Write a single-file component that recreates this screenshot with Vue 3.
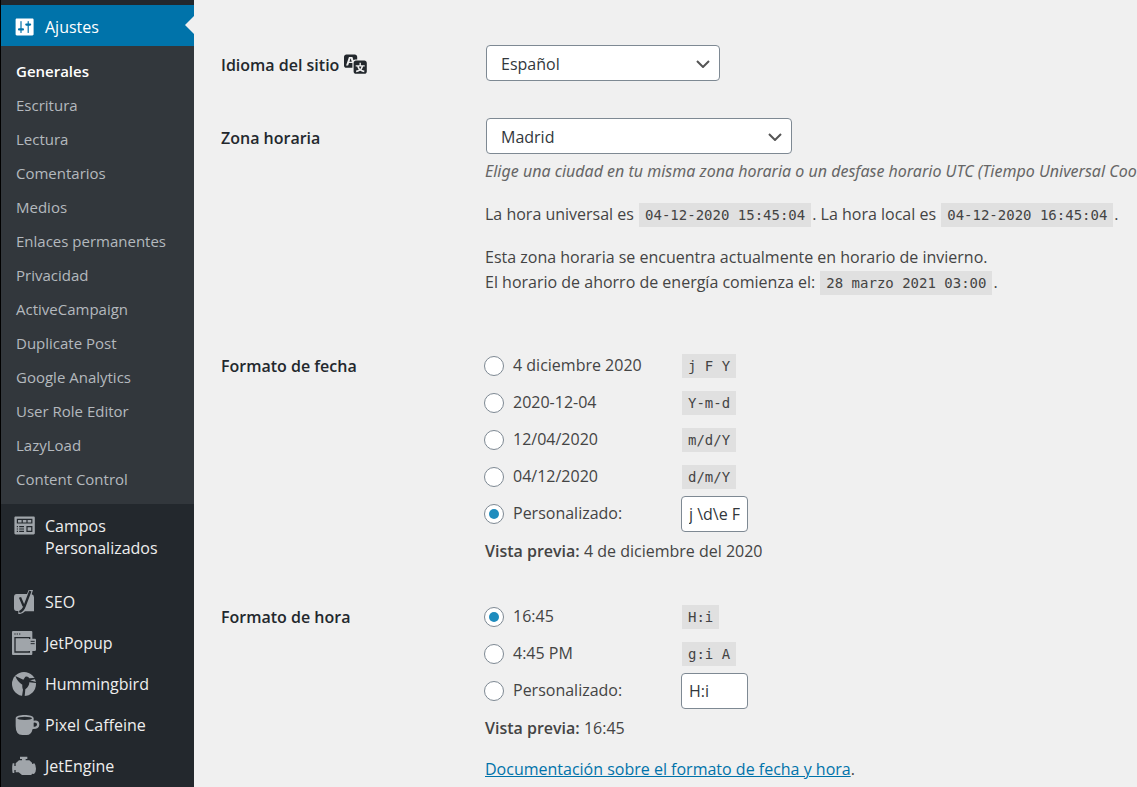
<script setup>
import { ref } from 'vue'

const submenu = ['Generales', 'Escritura', 'Lectura', 'Comentarios', 'Medios', 'Enlaces permanentes', 'Privacidad', 'ActiveCampaign', 'Duplicate Post', 'Google Analytics', 'User Role Editor', 'LazyLoad', 'Content Control']

const dateFormats = [
  { text: '4 diciembre 2020', format: 'j F Y' },
  { text: '2020-12-04', format: 'Y-m-d' },
  { text: '12/04/2020', format: 'm/d/Y' },
  { text: '04/12/2020', format: 'd/m/Y' },
]
const timeFormats = [
  { text: '16:45', format: 'H:i' },
  { text: '4:45 PM', format: 'g:i A' },
]

const language = ref('Español')
const zone = ref('Madrid')
const dateFormat = ref('custom')
const timeFormat = ref('H:i')
const customDate = ref('j \\d\\e F \\d\\e\\l Y')
const customTime = ref('H:i')
</script>

<template>
  <div class="admin">
    <nav class="sidebar" aria-label="Menú principal">
      <a class="item current" href="#ajustes">
        <svg class="icon" viewBox="0 0 20 20"><path d="M18 16V4c0-.55-.45-1-1-1H4c-.55 0-1 .45-1 1v12c0 .55.45 1 1 1h13c.55 0 1-.45 1-1zM8 11h1c.55 0 1 .45 1 1s-.45 1-1 1H8v1.5c0 .28-.22.5-.5.5s-.5-.22-.5-.5V13H6c-.55 0-1-.45-1-1s.45-1 1-1h1V5.5c0-.28.22-.5.5-.5s.5.22.5.5V11zm5-2h-1c-.55 0-1-.45-1-1s.45-1 1-1h1V5.5c0-.28.22-.5.5-.5s.5.22.5.5V7h1c.55 0 1 .45 1 1s-.45 1-1 1h-1v5.5c0 .28-.22.5-.5.5s-.5-.22-.5-.5V9z" /></svg>
        <span>Ajustes</span>
      </a>
      <ul class="submenu">
        <li v-for="(name, i) in submenu" :key="name"><a href="#" :class="{ active: i === 0 }">{{ name }}</a></li>
      </ul>
      <a class="item fields" href="#campos">
        <svg class="icon" viewBox="0 0 20 20"><path fill-rule="evenodd" d="M19 16V3c0-.55-.45-1-1-1H3c-.55 0-1 .45-1 1v13c0 .55.45 1 1 1h15c.55 0 1-.45 1-1zM4 4h13v4H4zM4 10h1v1H4zM6 10h4v1H6zM12 10h5v5h-5zM4 12h1v1H4zM6 12h4v1H6zM4 14h1v1H4zM6 14h4v1H6z" /><path d="M5 5h3v2H5zM9 5h3v2H9zM13 5h3v2h-3zM13 11h3v3h-3z" /></svg>
        <span>Campos Personalizados</span>
      </a>
      <a class="item" href="#seo">
        <svg class="icon" viewBox="36 267 72 72"><path d="M50 279H81L86 267H99L95 280Q102 281 102 289V331H75Q68 340 55 339V330H50Q42 330 42 321V288Q42 279 50 279Z" /><path class="cut" d="M60 289L71 315M91 270L74 315Q69 329 58 333" /></svg>
        <span>SEO</span>
      </a>
      <a class="item" href="#jetpopup">
        <svg class="icon" viewBox="36 30 72 72"><path d="M39 30H94Q97 30 97 33V53H105Q108 53 108 56V86Q108 90 104 90H97V99Q97 102 94 102H39Q36 102 36 99V33Q36 30 39 30Z" /><path class="line" d="M89 54V50H45V93H88V90" /><path class="dots" d="M43 39h4M50 39h4M57 39h4M92 61H104M92 68H104" /></svg>
        <span>JetPopup</span>
      </a>
      <a class="item" href="#hummingbird">
        <svg class="icon" viewBox="36 153 72 72"><circle cx="72" cy="189" r="36" /><path class="dark" d="M46 165L70 176L76 167Q84 164 88 172L108 170V174L90 178L108 183V186L88 184Q88 196 76 205L74 226H66L69 206Q66 200 67 191Q52 182 46 165Z" /></svg>
        <span>Hummingbird</span>
      </a>
      <a class="item" href="#pixelcaffeine">
        <svg class="icon mug" viewBox="36 276 84 72"><path fill-rule="evenodd" d="M47 292C47 279 101 279 101 292V299Q118 296 118 311Q117 325 98 324Q94 342 80 342H67Q47 342 47 315ZM101 305V317Q111 318 111 310Q111 304 101 305Z" /><ellipse class="dark" cx="74" cy="292" rx="22" ry="5" /></svg>
        <span>Pixel Caffeine</span>
      </a>
      <a class="item" href="#jetengine">
        <svg class="icon" viewBox="36 399 72 72"><path d="M60 407H82V414H77V418H88L96 425V429L103 427Q108 432 108 443Q108 454 102 459L96 458L94 462H66L56 454H47V447H43V456H38Q35 442 38 427H43V435H47V427L57 418H66V414H60Z" /></svg>
        <span>JetEngine</span>
      </a>
    </nav>

    <main class="content">
      <div class="row">
        <label class="heading low" for="language">Idioma del sitio
          <svg class="translate" viewBox="0 0 20 20"><path fill-rule="evenodd" d="M11 7H9.49c-.63 0-1.25.3-1.59.7L7 5H4.13l-2.39 7h1.69l.74-2H7v4H2c-1.1 0-2-.9-2-2V5c0-1.1.9-2 2-2h7c1.1 0 2 .9 2 2v2zM6.51 9H4.49l1-2.93zM10 8h7c1.1 0 2 .9 2 2v7c0 1.1-.9 2-2 2h-7c-1.1 0-2-.9-2-2v-7c0-1.1.9-2 2-2zm7.25 5v-1.08h-3.17V9.75h-1.16v2.17H9.75V13h1.28c.11.85.56 1.85 1.28 2.62-.87.36-1.89.62-2.31.62-.01.02.22.97.2 1.46.84 0 2.21-.5 3.28-1.15 1.09.65 2.48 1.15 3.34 1.15-.02-.49.2-1.44.2-1.46-.43 0-1.49-.27-2.38-.63.7-.77 1.14-1.77 1.25-2.61h1.36zm-3.81 1.93c-.5-.46-.85-1.13-1.01-1.93h2.09c-.17.8-.51 1.47-1 1.93l-.04.03s-.03-.02-.04-.03z" /></svg>
        </label>
        <div class="field">
          <div class="select language">
            <select id="language" v-model="language"><option>Español</option></select>
            <svg viewBox="0 0 14 8"><path d="M1 1l6 6 6-6" /></svg>
          </div>
        </div>
      </div>

      <div class="row zone">
        <label class="heading low" for="zone">Zona horaria</label>
        <div class="field">
          <div class="select city">
            <select id="zone" v-model="zone"><option>Madrid</option></select>
            <svg viewBox="0 0 14 8"><path d="M1 1l6 6 6-6" /></svg>
          </div>
          <p class="description">Elige una ciudad en tu misma zona horaria o un desfase horario UTC (Tiempo Universal Coordinado).</p>
          <p>La hora universal es <code>04-12-2020 15:45:04</code>. La hora local es <code>04-12-2020 16:45:04</code>.</p>
          <p>Esta zona horaria se encuentra actualmente en horario de invierno.<br>El horario de ahorro de energía comienza el: <code>28 marzo 2021 03:00</code>.</p>
        </div>
      </div>

      <div class="row date" role="group" aria-labelledby="date-title">
        <div id="date-title" class="heading">Formato de fecha</div>
        <div class="field">
          <div v-for="f in dateFormats" :key="f.format" class="option">
            <label><input v-model="dateFormat" type="radio" name="date" :value="f.format">{{ f.text }}</label>
            <code>{{ f.format }}</code>
          </div>
          <div class="option">
            <label><input v-model="dateFormat" type="radio" name="date" value="custom">Personalizado:</label>
            <input v-model="customDate" class="text" type="text" aria-label="Formato de fecha personalizado">
          </div>
          <div class="preview"><strong>Vista previa:</strong> 4 de diciembre del 2020</div>
        </div>
      </div>

      <div class="row" role="group" aria-labelledby="time-title">
        <div id="time-title" class="heading">Formato de hora</div>
        <div class="field">
          <div v-for="f in timeFormats" :key="f.format" class="option">
            <label><input v-model="timeFormat" type="radio" name="time" :value="f.format">{{ f.text }}</label>
            <code>{{ f.format }}</code>
          </div>
          <div class="option">
            <label><input v-model="timeFormat" type="radio" name="time" value="custom">Personalizado:</label>
            <input v-model="customTime" class="text" type="text" aria-label="Formato de hora personalizado">
          </div>
          <div class="preview"><strong>Vista previa:</strong> 16:45</div>
          <div class="docs"><a href="#formato">Documentación sobre el formato de fecha y hora</a>.</div>
        </div>
      </div>
    </main>
  </div>
</template>

<style>
body {
  background: #f0f0f0;
}
</style>

<style scoped>
.admin {
  display: flex;
  height: 100vh;
  overflow: hidden;
  font-family: "Open Sans", "Noto Sans", sans-serif;
  font-size: 16px;
  line-height: 25px;
  color: #444;
}
.sidebar {
  flex: 0 0 193px;
  border-left: 1px solid #000;
  padding-top: 5px;
  background: #23282d;
}
.item {
  position: relative;
  display: flex;
  gap: 9px;
  padding: 10px 12px 9px 11px;
  color: #eee;
  line-height: 22px;
  text-decoration: none;
}
.current {
  padding-top: 11px;
  padding-bottom: 8px;
  background: #0073aa;
  color: #fff;
}
.current::after {
  content: "";
  position: absolute;
  right: 0;
  top: 11px;
  border: solid transparent;
  border-width: 9px;
  border-right-color: #f0f0f0;
  border-left-width: 0;
}
.icon {
  flex: none;
  width: 24px;
  height: 24px;
  margin: -1px 0;
  fill: #a0a5aa;
}
.current .icon {
  fill: #fff;
}
.mug {
  width: 28px;
  margin-right: -4px;
}
.cut {
  fill: none;
  stroke: #23282d;
  stroke-width: 7;
}
.line {
  fill: none;
  stroke: #23282d;
  stroke-width: 4;
}
.dots {
  stroke: #23282d;
  stroke-width: 3;
}
.dark {
  fill: #23282d;
}
.submenu {
  margin: 0;
  padding: 8px 0;
  list-style: none;
  background: #32373c;
  font-size: 15px;
  line-height: 34px;
}
.submenu a {
  display: block;
  padding-left: 15px;
  color: #b4b9be;
  text-decoration: none;
}
.submenu .active {
  color: #fff;
  font-weight: 600;
}
.fields {
  margin: 1px 0 13px;
}
.content {
  flex: 1;
  min-width: 0;
  overflow: hidden;
  padding: 45px 0 0 27px;
}
.row {
  display: grid;
  grid-template-columns: 263px 1fr;
}
.row:first-child {
  margin-bottom: 37px;
}
.zone {
  margin-bottom: 52px;
}
.date {
  margin-bottom: 28px;
}
.heading {
  padding-top: 7px;
  color: #23282d;
  font-weight: 600;
}
.low {
  padding-top: 8px;
}
.translate {
  width: 24px;
  height: 24px;
  margin: -8px 0 -4px;
  fill: #23282d;
}
.field {
  min-width: 0;
}
.select {
  position: relative;
  margin-left: 2px;
}
.language {
  width: 234px;
}
.city {
  width: 306px;
}
.select select {
  display: block;
  width: 100%;
  height: 36px;
  padding: 2px 30px 0 14px;
  appearance: none;
  border: 1px solid #7e8993;
  border-radius: 4px;
  background: #fff;
  color: #32373c;
  font: inherit;
}
.select svg {
  position: absolute;
  right: 10px;
  top: 15px;
  width: 14px;
  height: 8px;
  fill: none;
  stroke: #555;
  stroke-width: 2;
  pointer-events: none;
}
p {
  margin: 18px 0 0 1px;
  white-space: nowrap;
}
.description {
  margin-top: 5px;
  color: #666;
  font-family: "Noto Sans", "Open Sans", sans-serif;
  font-style: italic;
}
code {
  display: inline-block;
  margin: 0 1px;
  padding: 0 6px;
  background: #e0e0e0;
  font-family: "DejaVu Sans Mono", monospace;
  font-size: 14px;
  line-height: 24px;
}
.option {
  display: grid;
  grid-template-columns: 197px 1fr;
  align-items: center;
  justify-items: start;
  height: 37px;
}
.option label {
  display: flex;
  align-items: center;
  gap: 9px;
}
input[type="radio"] {
  display: grid;
  place-content: center;
  width: 20px;
  height: 20px;
  margin: 0;
  appearance: none;
  border: 1px solid #7e8993;
  border-radius: 50%;
  background: #fff;
}
input[type="radio"]:checked::before {
  content: "";
  width: 10px;
  height: 10px;
  border-radius: 50%;
  background: #1e8cbe;
}
.text {
  box-sizing: border-box;
  width: 67px;
  height: 36px;
  padding: 0 7px;
  border: 1px solid #7e8993;
  border-radius: 4px;
  background: #fff;
  color: #32373c;
  font: inherit;
}
.preview {
  margin-left: 1px;
  line-height: 38px;
}
strong {
  font-weight: 600;
}
.docs {
  margin: 10px 0 0 1px;
}
.docs a {
  color: #0073aa;
}
</style>
